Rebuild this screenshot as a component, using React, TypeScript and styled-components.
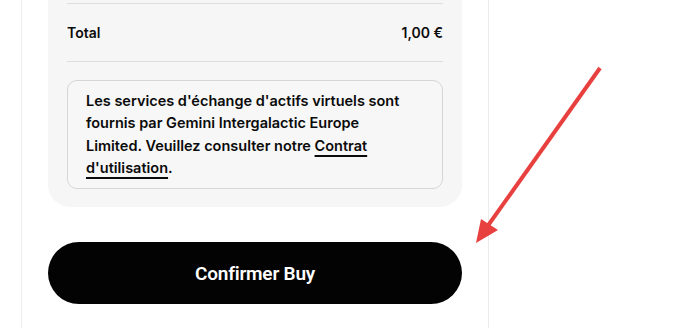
import styled, { createGlobalStyle } from 'styled-components'

const GlobalStyle = createGlobalStyle`
  html, body {
    margin: 0;
    padding: 0;
    background: #ffffff;
    overflow: hidden;
  }
  * {
    box-sizing: border-box;
  }
`

const Page = styled.div`
  position: relative;
  width: 678px;
  height: 328px;
  overflow: hidden;
  font-family: Inter, "Noto Sans", sans-serif;
  color: #0b0b0b;
`

const Column = styled.div`
  margin-left: 21px;
  width: 468px;
  height: 100%;
  border-left: 1px solid #ececec;
  border-right: 1px solid #ececec;
  padding: 0 26px;
  display: flex;
  flex-direction: column;
`

const Summary = styled.div`
  background-color: #f6f6f6;
  border-radius: 0 0 22px 22px;
  padding: 3px 19px 18px;
  display: flex;
  flex-direction: column;
`

const Row = styled.div<{ $bottomBorder?: boolean }>`
  display: flex;
  justify-content: space-between;
  align-items: center;
  height: 59px;
  border-top: 1px solid #dedede;
  border-bottom: ${(p) => (p.$bottomBorder ? '1px solid #dedede' : 'none')};
  font-size: 14px;
  font-weight: 600;
`

const Notice = styled.div`
  margin-top: 18px;
  border: 1px solid #d6d6d6;
  border-radius: 10px;
  padding: 9px 28px 9px 18px;
  font-size: 14.5px;
  font-weight: 600;
  line-height: 22.3px;
  background-color: #f7f7f7;
`

const Link = styled.a`
  color: inherit;
  text-decoration: underline;
  text-underline-offset: 4px;
  text-decoration-thickness: 1.5px;
`

const ConfirmButton = styled.button`
  margin-top: 35px;
  height: 62px;
  width: 100%;
  border: none;
  border-radius: 31px;
  background-color: #030304;
  color: #ffffff;
  font-family: Roboto, "Liberation Sans", sans-serif;
  font-weight: 600;
  font-size: 19px;
  letter-spacing: -0.2px;
  cursor: pointer;
`

const Arrow = styled.svg`
  position: absolute;
  left: 468px;
  top: 60px;
  width: 145px;
  height: 190px;
  pointer-events: none;
`

const App = () => {
  return (
    <Page>
      <GlobalStyle />
      <Column>
        <Summary>
          <Row $bottomBorder>
            <span>Total</span>
            <span>1,00 €</span>
          </Row>
          <Notice>
            Les services d'échange d'actifs virtuels sont fournis par Gemini Intergalactic Europe
            Limited. Veuillez consulter notre <Link href="#">Contrat d'utilisation</Link>.
          </Notice>
        </Summary>
        <ConfirmButton>Confirmer Buy</ConfirmButton>
      </Column>
      <Arrow viewBox="0 0 145 190">
        <line x1="132" y1="8" x2="14" y2="174" stroke="#e8403e" strokeWidth="4" strokeLinecap="butt" />
        <polygon points="8,183 13,159 30,170" fill="#e8403e" />
      </Arrow>
    </Page>
  )
}

export default App
